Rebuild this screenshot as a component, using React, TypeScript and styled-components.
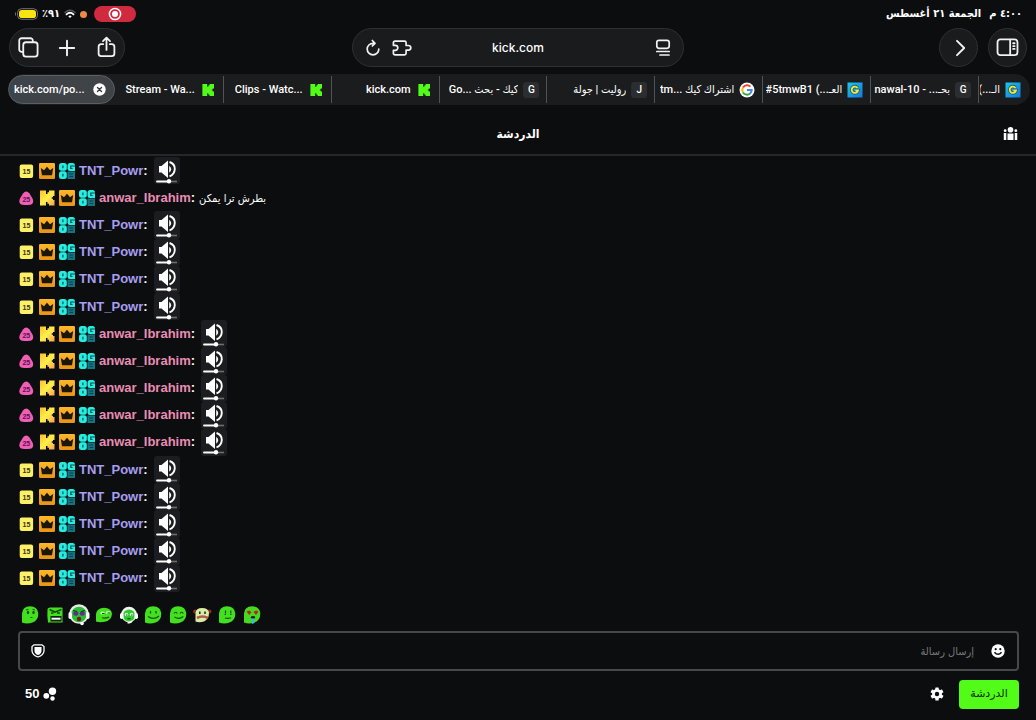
import React from "react";
import styled, { createGlobalStyle } from "styled-components";

const arabic = `"DejaVu Sans Condensed", "DejaVu Sans", sans-serif`;

const GlobalStyle = createGlobalStyle`
  *, *::before, *::after { box-sizing: border-box; }
  body { margin: 0; background: #0c0d0f; color: #fff; font-family: Inter, ${arabic}; }
  button { padding: 0; border: 0; background: none; color: inherit; font: inherit; cursor: pointer; }
  a { color: inherit; text-decoration: none; }
  svg { display: block; flex: none; }
`;

const Page = styled.div`
  display: flex;
  flex-direction: column;
  min-height: 100vh;
`;

/* ---------- status bar ---------- */
const StatusBar = styled.header`
  display: flex;
  justify-content: space-between;
  align-items: center;
  height: 28px;
  padding: 0 14px;
`;
const StatusGroup = styled.div<{ $gap: number }>`
  display: flex;
  align-items: center;
  gap: ${(p) => p.$gap}px;
  font: 700 11px/16px ${arabic};
`;
const RecordPill = styled.button`
  display: grid;
  place-items: center;
  width: 42px;
  height: 16px;
  margin-left: 3px;
  border-radius: 8px;
  background: #d02a3e;
`;
const Dot = styled.span`
  width: 7px;
  height: 7px;
  border-radius: 50%;
  background: #ec8a45;
`;

/* ---------- browser toolbar ---------- */
const Toolbar = styled.nav`
  display: grid;
  grid-template-columns: 1fr minmax(0, 332px) 1fr;
  align-items: center;
  padding: 0 9px;
`;
const Pill = styled.div`
  display: flex;
  align-items: center;
  height: 39px;
  border: 1px solid #2e3033;
  border-radius: 20px;
  background: #1a1b1d;
`;
const ActionsPill = styled(Pill)`
  justify-content: space-between;
  justify-self: start;
  width: 116px;
  padding: 0 6px;
`;
const AddressPill = styled(Pill)`
  justify-content: space-between;
  padding: 0 8px;
`;
const PillSide = styled.div<{ $end?: boolean }>`
  display: flex;
  flex: 1;
  gap: 5px;
  justify-content: ${(p) => (p.$end ? "flex-end" : "flex-start")};
`;
const Address = styled.span`
  font-size: 12px;
  font-weight: 500;
  line-height: 16px;
`;
const RoundGroup = styled.div`
  display: flex;
  justify-self: end;
  gap: 10px;
`;
const RoundButton = styled.button`
  display: grid;
  place-items: center;
  width: 39px;
  height: 39px;
  border: 1px solid #2e3033;
  border-radius: 50%;
  background: #1a1b1d;
`;
const IconButton = styled.button`
  display: grid;
  place-items: center;
  width: 24px;
  height: 24px;
`;

/* ---------- tabs ---------- */
const TabStrip = styled.div`
  display: grid;
  grid-template-columns: minmax(0, 107fr) repeat(8, minmax(0, 108fr)) minmax(0, 52fr);
  align-items: center;
  height: 31px;
  margin: 7px 6px 0 8px;
  border-radius: 16px;
  background: #1b1c1e;
  font: 500 11px/16px Roboto, ${arabic};
  overflow: hidden;
`;
const ActiveTab = styled.div`
  display: flex;
  align-items: center;
  justify-content: space-between;
  min-width: 0;
  height: 29px;
  padding: 0 8px 0 5px;
  border: 1px solid #5c6065;
  border-radius: 15px;
  background: linear-gradient(90deg, #3b444b, #3f4347 40%, #404346);
`;
const Tab = styled.a<{ $first?: boolean; $last?: boolean }>`
  display: flex;
  align-items: center;
  justify-content: flex-end;
  gap: 5px;
  min-width: 0;
  height: 27px;
  padding: 0 ${(p) => (p.$last ? 9 : 7)}px 0 1px;
  border-left: 1px solid ${(p) => (p.$first ? "transparent" : "#505255")};
`;
const TabTitle = styled.span`
  display: flex;
  justify-content: flex-end;
  min-width: 0;
  overflow: hidden;
  white-space: nowrap;
`;
const Letter = styled.span`
  display: grid;
  flex: none;
  place-items: center;
  width: 16px;
  height: 16px;
  border-radius: 3px;
  background: #2c2d2f;
  font-size: 10px;
`;

/* ---------- chat ---------- */
const ChatHeader = styled.div`
  display: grid;
  grid-template-columns: 1fr auto 1fr;
  align-items: center;
  height: 51px;
  padding: 8px 17px 0;
  border-bottom: 2px solid #25282b;
`;
const ChatTitle = styled.h1`
  grid-column: 2;
  margin: 0;
  font: 700 12px/20px ${arabic};
`;
const PeopleButton = styled(IconButton)`
  justify-self: end;
  width: 18px;
`;
const Messages = styled.ul`
  display: grid;
  flex: 1;
  grid-auto-rows: minmax(27px, 1fr);
  margin: 0;
  padding: 1px 19px 0;
  list-style: none;
  font: 400 13px/20px "Liberation Sans", ${arabic};
`;
const Message = styled.li`
  display: flex;
  align-items: center;
`;
const Badges = styled.span`
  display: flex;
  gap: 4px;
  margin-right: 4px;
`;
const UserName = styled.a<{ $color: string }>`
  color: ${(p) => p.$color};
  font-weight: 700;
`;
const Colon = styled.span`
  font-weight: 700;
`;
const Body = styled.span`
  margin-left: 4px;
  font-size: 11px;
`;
const SoundEmote = styled.span`
  display: grid;
  align-self: stretch;
  place-items: center;
  width: 26px;
  margin-left: 6px;
  border-radius: 3px;
  background: #1c1d20;
`;

/* ---------- composer ---------- */
const EmoteBar = styled.div`
  display: grid;
  grid-template-columns: repeat(10, 1fr);
  justify-items: center;
  align-items: center;
  width: 246px;
  height: 39px;
  margin-left: 18px;
  padding-top: 6px;
`;
const EmoteButton = styled.button`
  width: 22px;
  height: 22px;
`;
const Composer = styled.div`
  display: flex;
  align-items: center;
  height: 40px;
  margin: 0 17px 0 18px;
  padding: 0 7px 0 6px;
  border: 2px solid #46484b;
  border-radius: 4px;
`;
const MessageInput = styled.input`
  flex: 1;
  min-width: 0;
  height: 30px;
  padding: 0 12px;
  border: 0;
  outline: 0;
  background: transparent;
  color: #fff;
  font: 400 11px/20px "Liberation Sans", ${arabic};
  &::placeholder { color: #77797c; opacity: 1; }
`;
const Footer = styled.footer`
  display: flex;
  align-items: center;
  justify-content: space-between;
  height: 49px;
  padding: 0 17px 3px 25px;
`;
const Points = styled.button`
  display: flex;
  align-items: center;
  gap: 4px;
  font: 700 13px/20px "Liberation Sans", sans-serif;
`;
const FooterActions = styled.div`
  display: flex;
  align-items: center;
  gap: 10px;
`;
const SendButton = styled.button`
  width: 60px;
  height: 29px;
  border-radius: 4px;
  background: #53fc18;
  color: #0f2a08;
  font: 400 11px/20px "DejaVu Sans", sans-serif;
`;

/* ---------- icons ---------- */
const line = {
  fill: "none",
  stroke: "#f2f2f2",
  strokeWidth: 1.9,
  strokeLinecap: "round" as const,
  strokeLinejoin: "round" as const,
};

const Battery = () => (
  <svg width="24" height="12" viewBox="0 0 24 12">
    <rect x="3.5" y="0.7" width="20" height="10.6" rx="4" fill="#111" stroke="#707274" />
    <path d="M2 4C0.500 4.500 0.500 7.500 2 8z" fill="#707274" />
    <rect x="5" y="2" width="17" height="8" rx="2.800" fill="#fbe311" />
  </svg>
);
const Wifi = () => (
  <svg width="12" height="10" viewBox="0 0 12 10" fill="none" strokeLinecap="round">
    <path d="M1 3.500Q6 -1 11 3.500" stroke="#55585a" strokeWidth="1.500" />
    <path d="M2.500 5.400Q6 2.200 9.500 5.400" stroke="#fff" strokeWidth="1.900" />
    <path d="M4.300 7.200Q6 5.700 7.700 7.200L6 9.100z" fill="#fff" />
  </svg>
);
const Record = () => (
  <svg width="14" height="14" viewBox="0 0 14 14">
    <circle cx="7" cy="7" r="5.600" fill="none" stroke="#fff" strokeWidth="1.500" />
    <circle cx="7" cy="7" r="3" fill="#fff" />
  </svg>
);
const CopyIcon = () => (
  <svg width="21" height="21" viewBox="0 0 22 22" {...line}>
    <path d="M5 15.500H3.800A2.500 2.500 0 0 1 1.300 13V3.800A2.500 2.500 0 0 1 3.800 1.300H13A2.500 2.500 0 0 1 15.500 3.800V5" />
    <rect x="5.500" y="5.500" width="15" height="15" rx="2.800" />
  </svg>
);
const PlusIcon = () => (
  <svg width="18" height="18" viewBox="0 0 18 18" {...line}>
    <path d="M9 1.800V16.200M1.800 9H16.200" />
  </svg>
);
const ShareIcon = () => (
  <svg width="19" height="23" viewBox="0 0 20 24" {...line}>
    <path d="M6.500 8.500H4.500A2.800 2.800 0 0 0 1.700 11.300V18.200A2.800 2.800 0 0 0 4.500 21H15.500A2.800 2.800 0 0 0 18.300 18.200V11.300A2.800 2.800 0 0 0 15.500 8.500H13.500M10 14.500V1.600M6.300 5.200L10 1.600L13.700 5.200" />
  </svg>
);
const ReloadIcon = () => (
  <svg width="16" height="18" viewBox="0 0 16 18" {...line} strokeWidth="1.700">
    <path d="M9.800 4.300H8A5.800 5.800 0 1 0 13.800 10.100M7.300 1.500L10 4.300L7.300 7" />
  </svg>
);
const PuzzleIcon = () => (
  <svg width="20" height="16" viewBox="0 0 20 16" {...line} strokeWidth="1.700">
    <path d="M3 1.200H12.500A1.600 1.600 0 0 1 14.100 2.800V5.500H16.500A2.300 2.300 0 0 1 16.500 10.100H14.100V13.200A1.600 1.600 0 0 1 12.500 14.800H3A1.600 1.600 0 0 1 1.400 13.200V10.300H3.300A2.300 2.300 0 0 0 3.300 5.300H1.400V2.800A1.600 1.600 0 0 1 3 1.200Z" />
  </svg>
);
const ReaderIcon = () => (
  <svg width="16" height="18" viewBox="0 0 16 18" {...line} strokeWidth="1.700">
    <rect x="1.800" y="1.300" width="12.400" height="8" rx="2.200" />
    <path d="M1.800 12.500H14.200M5 16H14" />
  </svg>
);
const ChevronIcon = () => (
  <svg width="16" height="18" viewBox="-3 0 16 18" {...line}>
    <path d="M3 1.800L10.200 9L3 16.200" />
  </svg>
);
const SidebarIcon = () => (
  <svg width="23" height="19" viewBox="0 0 24 20" {...line}>
    <rect x="1.500" y="1.500" width="21" height="16.600" rx="3" />
    <path d="M14.800 1.800V17.500M17.900 5.500H19.500M17.900 8.500H19.500M17.900 11.500H19.500" />
  </svg>
);
const CloseIcon = () => (
  <svg width="13" height="13" viewBox="0 0 13 13">
    <circle cx="6.500" cy="6.500" r="6.200" fill="#fff" />
    <path d="M4.500 4.500L8.500 8.500M8.500 4.500L4.500 8.500" stroke="#35393d" strokeWidth="1.400" strokeLinecap="round" />
  </svg>
);
const kShape = "M0.500 0.500H6.500V4H8V2.200H9.500V0.500H15V6H13.500V7.300H12.300V8.700H13.500V10H15V15.500H9.500V13.800H8V12H6.500V15.500H0.500Z";
const KickFavicon = () => (
  <svg width="16" height="16" viewBox="-2 -2 19 20">
    <path d={kShape} fill="#53fc18" />
  </svg>
);
const GoogleFavicon = () => (
  <svg width="16" height="16" viewBox="0 0 16 16">
    <circle cx="8" cy="8" r="7.500" fill="#fff" />
    <g fill="none" strokeWidth="2">
      <path d="M11.400 4.600A4.700 4.700 0 0 0 4 5.600" stroke="#ea4335" />
      <path d="M4 5.600A4.700 4.700 0 0 0 4 10.400" stroke="#fbbc05" />
      <path d="M4 10.400A4.700 4.700 0 0 0 11.100 11.500" stroke="#34a853" />
      <path d="M11.100 11.500A4.700 4.700 0 0 0 12.700 8H8" stroke="#4285f4" />
    </g>
  </svg>
);
const GiftFavicon = () => (
  <svg width="16" height="16" viewBox="0 0 16 16">
    <defs>
      <linearGradient id="gift" x1="0" y1="0" x2="1" y2="1">
        <stop offset="0" stopColor="#18c8ee" />
        <stop offset="1" stopColor="#1476e0" />
      </linearGradient>
    </defs>
    <rect x="0.500" y="0.500" width="15" height="15" fill="url(#gift)" />
    <path d="M10.500 5.900A3.200 3.200 0 1 0 11 8.500H8.300" fill="none" stroke="#1c6268" strokeWidth="3.400" />
    <path d="M10.500 5.900A3.200 3.200 0 1 0 11 8.500H8.300" fill="none" stroke="#f2e545" strokeWidth="1.800" />
  </svg>
);
const PeopleIcon = () => (
  <svg width="15" height="15" viewBox="0 0 16 16" fill="#fff">
    <circle cx="8" cy="4" r="3" />
    <circle cx="2.300" cy="5" r="1.500" />
    <circle cx="13.700" cy="5" r="1.500" />
    <path d="M4.800 8H11.200V15H4.800ZM0.800 7.500H3.500V15H0.800ZM12.500 7.500H15.200V15H12.500Z" />
  </svg>
);

const LevelBadge = () => (
  <svg width="16" height="16" viewBox="0 0 16 16">
    <rect x="0.700" y="1.500" width="13.400" height="13.400" rx="2" fill="#fbf068" />
    <text x="7.400" y="10.800" textAnchor="middle" fontFamily="Liberation Sans" fontSize="7" fontWeight="700" fill="#37351a">15</text>
  </svg>
);
const GuitarBadge = () => (
  <svg width="16" height="16" viewBox="0 0 16 16">
    <path d="M7.200 1.500Q9 1.500 10.500 3.500L13.500 8.500Q16 15 9 15H5.500Q-1.500 15 1 8.500L4 3.500Q5.500 1.500 7.200 1.500Z" fill="#ef5fb8" />
    <text x="7.300" y="11.800" textAnchor="middle" fontFamily="Liberation Sans" fontSize="7" fontWeight="700" fill="#5c1246">25</text>
  </svg>
);
const KBadge = () => (
  <svg width="16" height="16" viewBox="0 0 15 16">
    <defs>
      <linearGradient id="gold" x1="0" y1="0" x2="1" y2="1">
        <stop offset="0" stopColor="#ffc02a" />
        <stop offset="0.500" stopColor="#fff04c" />
        <stop offset="1" stopColor="#f9a050" />
      </linearGradient>
    </defs>
    <path d={kShape} fill="url(#gold)" />
  </svg>
);
const CrownBadge = () => (
  <svg width="16" height="16" viewBox="0 0 16 16">
    <defs>
      <linearGradient id="crown" x1="0" y1="0" x2="0" y2="1">
        <stop offset="0" stopColor="#fdb72a" />
        <stop offset="1" stopColor="#e99416" />
      </linearGradient>
    </defs>
    <rect width="16" height="16" rx="1.200" fill="url(#crown)" />
    <path d="M1.800 5L5 7.300L8 3.800L11 7.300L14.200 5L13 12.300H3Z" fill="#1c1608" />
  </svg>
);
const OgBadge = () => (
  <svg width="16" height="16" viewBox="0 0 16 16">
    <path d="M8.500 8.500H16V16H8.500Z" fill="#147482" />
    <path d="M10.500 11H14M10.500 13.500H14" stroke="#0c3f4a" />
    <rect x="0" y="0" width="7.800" height="7.800" rx="2.500" fill="#25eee0" />
    <rect x="0" y="8.200" width="7.800" height="7.800" rx="2.500" fill="#25eee0" />
    <path d="M10.800 0H13.500Q16 0 16 2.500V8H10.800Q8.500 8 8.500 5.500V2.500Q8.500 0 10.800 0Z" fill="#25eee0" />
    <path d="M3.900 2.500V5.300M3.900 10.700V13.500M16 3H11.800V5.500H13.500" stroke="#0b4d50" strokeWidth="1.200" fill="none" />
  </svg>
);
const SpeakerIcon = () => (
  <svg width="24" height="26" viewBox="0 0 24 26">
    <path d="M4 8H6.500L13 2.500V20L6.500 14.500H4Z" fill="#fff" />
    <path d="M14.200 7.800Q18.300 11.200 14.200 14.800Z" fill="#fff" />
    <path d="M14.500 4Q20 6 19.800 11Q19.500 16.500 14.500 18.300" fill="none" stroke="#fff" strokeWidth="1.900" />
    <path d="M2 23.500H14" stroke="#fff" strokeWidth="1.800" strokeLinecap="round" />
    <path d="M14 23.500H22" stroke="#6c6e70" strokeWidth="1.600" />
    <circle cx="14" cy="23.300" r="2.200" fill="#fff" />
  </svg>
);
const ShieldIcon = () => (
  <svg width="16" height="16" viewBox="0 0 16 16">
    <path d="M4 1.800H12L14 3.500V8Q13.500 12.300 8 14Q2.500 12.300 2 8V3.500Z" fill="none" stroke="#fff" strokeWidth="1.300" />
    <path d="M4.500 4H11.500V8Q11.200 11 8 12Q4.800 11 4.500 8Z" fill="#fff" />
  </svg>
);
const SmileIcon = () => (
  <svg width="14" height="14" viewBox="0 0 14 14">
    <circle cx="7" cy="7" r="6.700" fill="#fff" />
    <circle cx="4.700" cy="5.200" r="1.100" fill="#0c0d0f" />
    <circle cx="9.300" cy="5.200" r="1.100" fill="#0c0d0f" />
    <path d="M3.500 8.200Q7 12.500 10.500 8.200" fill="none" stroke="#0c0d0f" strokeWidth="1.500" />
  </svg>
);
const GearIcon = () => (
  <svg width="14" height="14" viewBox="0 0 14 14">
    <g fill="#fff">
      <circle cx="7" cy="7" r="4.900" />
      {[0, 60, 120].map((a) => (
        <rect key={a} x="5.300" y="0.400" width="3.400" height="13.200" rx="0.500" transform={`rotate(${a} 7 7)`} />
      ))}
    </g>
    <circle cx="7" cy="7" r="2.200" fill="#0c0d0f" />
  </svg>
);
const PointsIcon = () => (
  <svg width="14" height="14" viewBox="0 0 14 14" fill="#fff">
    <circle cx="9.500" cy="4.200" r="3.700" />
    <circle cx="3.300" cy="8.800" r="2.900" />
    <circle cx="9.500" cy="11.500" r="2.200" />
  </svg>
);

/* ---------- emotes ---------- */
const blob = "M3 18.500V9.500Q3.500 2.500 11 2.300Q18.800 2.500 19.300 9.500Q19.300 16.500 13.500 18.500Q8 20.500 3 18.500Z";
const green = "#43e020";
const ink = "#17500e";
const Face = ({ children }: { children: React.ReactNode }) => (
  <svg width="22" height="22" viewBox="0 0 22 22">{children}</svg>
);
const emotes: { name: string; art: React.ReactNode }[] = [
  { name: "Thinking", art: <><path d={blob} fill={green} /><ellipse cx="9" cy="8.500" rx="1.200" ry="1.700" fill={ink} /><ellipse cx="14.500" cy="8.500" rx="1.200" ry="1.700" fill={ink} /><path d="M7 6L9.500 5.300M13.500 5.300L16 6M11.500 13.500H13.500" stroke={ink} /></> },
  { name: "Rage", art: <><path d="M3.500 5Q4 3.500 6 3.500H18Q19 4 18.500 6V18.500H4Q3 12 3.500 5Z" fill={green} /><path d="M5.500 5.500L11 8L17.500 5.500M7 9H9.500M13 9H16" stroke={ink} strokeWidth="1.700" fill="none" /><rect x="6.500" y="12" width="11" height="5.500" fill="#10240c" /><path d="M7.500 14.700H16.500" stroke="#fff" strokeWidth="2" /></> },
  { name: "Hype", art: <><circle cx="11" cy="10" r="9.800" fill="#e8e8e8" /><circle cx="11" cy="10.500" r="7.800" fill="#29bf32" /><ellipse cx="7.800" cy="9.500" rx="2.600" ry="2.200" fill="#6a2596" /><ellipse cx="14.300" cy="9.500" rx="2.600" ry="2.200" fill="#6a2596" /><path d="M5 6.500L9 7.500M13 7.500L17 6.500" stroke="#143f16" strokeWidth="1.200" /><circle cx="11" cy="15" r="2.200" fill="#7b1420" /><rect x="0.500" y="8" width="3.500" height="7" rx="1.700" fill="#fff" /><rect x="18" y="8" width="3.500" height="7" rx="1.700" fill="#fff" /><circle cx="14" cy="19.500" r="1.800" fill="#fff" /></> },
  { name: "Side eye", art: <><path d="M3 17.500V10Q4 4 11 3.800Q18.500 4 19 10Q18.500 15.500 13 17.500Q7 19 3 17.500Z" fill={green} /><ellipse cx="9.500" cy="9" rx="2.400" ry="1.600" fill="#bdf5a8" /><ellipse cx="15" cy="8.500" rx="2.400" ry="1.600" fill="#bdf5a8" /><path d="M9 9.500H11.500M14.500 9H17M9 13.800Q12.500 14.800 16 13" stroke={ink} strokeWidth="1.100" fill="none" /></> },
  { name: "Cozy", art: <><circle cx="11" cy="10.500" r="7.800" fill="#f0f5ef" /><circle cx="11" cy="11.500" r="6" fill="#2fc92e" /><circle cx="8.500" cy="10.500" r="1.800" fill="#d3f5d0" /><circle cx="13.500" cy="10.500" r="1.800" fill="#d3f5d0" /><path d="M8 11H9.500M13 11H14.500M9.500 14.700H12.500" stroke={ink} strokeWidth="1.200" /><rect x="2" y="9" width="3.500" height="6" rx="1.700" fill="#fff" /><rect x="16.500" y="9" width="3.500" height="6" rx="1.700" fill="#fff" /><path d="M9.500 18.500Q12.500 19.500 14 17" stroke="#fff" strokeWidth="1.500" fill="none" /></> },
  { name: "Smirk", art: <><path d={blob} fill={green} /><path d="M8.500 7V9.500M14 7V9.500M6 12.500Q11.500 16.500 17 12" stroke={ink} strokeWidth="1.300" fill="none" /></> },
  { name: "Happy", art: <><path d={blob} fill={green} /><path d="M7 9.500Q8.500 7 10.300 9.500M13 9.500Q14.500 7 16.300 9.500M7.500 13Q12 16 16.300 12.500" stroke={ink} strokeWidth="1.100" fill="none" /></> },
  { name: "Burger", art: <><circle cx="4" cy="7.500" r="2" fill="#8e2e20" /><circle cx="18.500" cy="7.500" r="2" fill="#8e2e20" /><path d="M4.500 17.500V9Q5 4 11 4Q17.500 4 18 9Q18 15 13 17.500Q8 19 4.500 17.500Z" fill="#d9eda5" /><path d="M8.800 7.500V10M14 7.500V10" stroke="#222" strokeWidth="1.500" /><path d="M6 14Q11.500 11 17 14" stroke="#b35a48" strokeWidth="2.600" fill="none" /></> },
  { name: "Look down", art: <><path d={blob} fill={green} /><path d="M9.500 6.500V9.500M14.800 6.500V9.500M8.500 10.500H10M14 10.500H15.500M9 14Q12 15 15 13.700" stroke={ink} strokeWidth="1.200" fill="none" /></> },
  { name: "Love", art: <><path d={blob} fill="#47d922" /><path d="M5.500 7.500L8 6.500L10.500 8L8.300 11ZM12.500 8L15 6.500L17.500 7.500L15 11Z" fill="#b12719" /><ellipse cx="12" cy="13.500" rx="2.200" ry="1.400" fill="#301b14" /><path d="M10.500 14.500H13.500V19L11 20Z" fill="#35bddc" /></> },
];

/* ---------- data ---------- */
const tabs: { title: string; icon: React.ReactNode }[] = [
  { title: "Stream - Wa...", icon: <KickFavicon /> },
  { title: "Clips - Watc...", icon: <KickFavicon /> },
  { title: "kick.com", icon: <KickFavicon /> },
  { title: "Go... كيك - بحث", icon: <Letter>G</Letter> },
  { title: "روليت | جولة", icon: <Letter>J</Letter> },
  { title: "tm... اشتراك كيك", icon: <GoogleFavicon /> },
  { title: "#5tmwB1 (...العـ", icon: <GiftFavicon /> },
  { title: "nawal-10 - ...بحـ", icon: <Letter>G</Letter> },
  { title: "1 (...الـ", icon: <GiftFavicon /> },
];

type Author = "TNT_Powr" | "anwar_Ibrahim";
const sound = (author: Author, count: number) =>
  Array.from({ length: count }, () => ({ author, text: "" }));
const messages: { author: Author; text: string }[] = [
  ...sound("TNT_Powr", 1),
  { author: "anwar_Ibrahim", text: "بطرش ترا يمكن" },
  ...sound("TNT_Powr", 4),
  ...sound("anwar_Ibrahim", 5),
  ...sound("TNT_Powr", 5),
];
const authors = {
  TNT_Powr: { color: "#a79ef0", badges: <><LevelBadge /><CrownBadge /><OgBadge /></> },
  anwar_Ibrahim: { color: "#e88db4", badges: <><GuitarBadge /><KBadge /><CrownBadge /><OgBadge /></> },
};

export default function App() {
  return (
    <>
      <GlobalStyle />
      <Page>
        <StatusBar>
          <StatusGroup $gap={4}>
            <Battery />
            <span dir="rtl">٩١٪</span>
            <Wifi />
            <Dot />
            <RecordPill aria-label="Recording"><Record /></RecordPill>
          </StatusGroup>
          <StatusGroup $gap={8} dir="rtl">
            <span>٤:٠٠ م</span>
            <span>الجمعة ٢١ أغسطس</span>
          </StatusGroup>
        </StatusBar>

        <Toolbar>
          <ActionsPill>
            <IconButton aria-label="Tabs"><CopyIcon /></IconButton>
            <IconButton aria-label="New tab"><PlusIcon /></IconButton>
            <IconButton aria-label="Share"><ShareIcon /></IconButton>
          </ActionsPill>
          <AddressPill>
            <PillSide>
              <IconButton aria-label="Reload"><ReloadIcon /></IconButton>
              <IconButton aria-label="Extensions"><PuzzleIcon /></IconButton>
            </PillSide>
            <Address>kick.com</Address>
            <PillSide $end>
              <IconButton aria-label="Reader"><ReaderIcon /></IconButton>
            </PillSide>
          </AddressPill>
          <RoundGroup>
            <RoundButton aria-label="Forward"><ChevronIcon /></RoundButton>
            <RoundButton aria-label="Sidebar"><SidebarIcon /></RoundButton>
          </RoundGroup>
        </Toolbar>

        <TabStrip>
          <ActiveTab>
            <TabTitle as="a" href="#">kick.com/po...</TabTitle>
            <button aria-label="Close tab"><CloseIcon /></button>
          </ActiveTab>
          {tabs.map((tab, i) => (
            <Tab key={tab.title} href="#" $first={i === 0} $last={i === tabs.length - 1}>
              <TabTitle>{tab.title}</TabTitle>
              {tab.icon}
            </Tab>
          ))}
        </TabStrip>

        <ChatHeader>
          <ChatTitle dir="rtl">الدردشة</ChatTitle>
          <PeopleButton aria-label="Viewers"><PeopleIcon /></PeopleButton>
        </ChatHeader>

        <Messages>
          {messages.map((m, i) => (
            <Message key={i}>
              <Badges>{authors[m.author].badges}</Badges>
              <UserName href="#" $color={authors[m.author].color}>{m.author}</UserName>
              <Colon>:</Colon>
              {m.text ? <Body dir="rtl">{m.text}</Body> : <SoundEmote><SpeakerIcon /></SoundEmote>}
            </Message>
          ))}
        </Messages>

        <EmoteBar>
          {emotes.map((e) => (
            <EmoteButton key={e.name} aria-label={e.name}><Face>{e.art}</Face></EmoteButton>
          ))}
        </EmoteBar>

        <Composer>
          <IconButton aria-label="Chat rules"><ShieldIcon /></IconButton>
          <MessageInput dir="rtl" aria-label="إرسال رسالة" placeholder="إرسال رسالة" />
          <IconButton aria-label="Emotes"><SmileIcon /></IconButton>
        </Composer>

        <Footer>
          <Points>50 <PointsIcon /></Points>
          <FooterActions>
            <IconButton aria-label="Settings"><GearIcon /></IconButton>
            <SendButton dir="rtl">الدردشة</SendButton>
          </FooterActions>
        </Footer>
      </Page>
    </>
  );
}
